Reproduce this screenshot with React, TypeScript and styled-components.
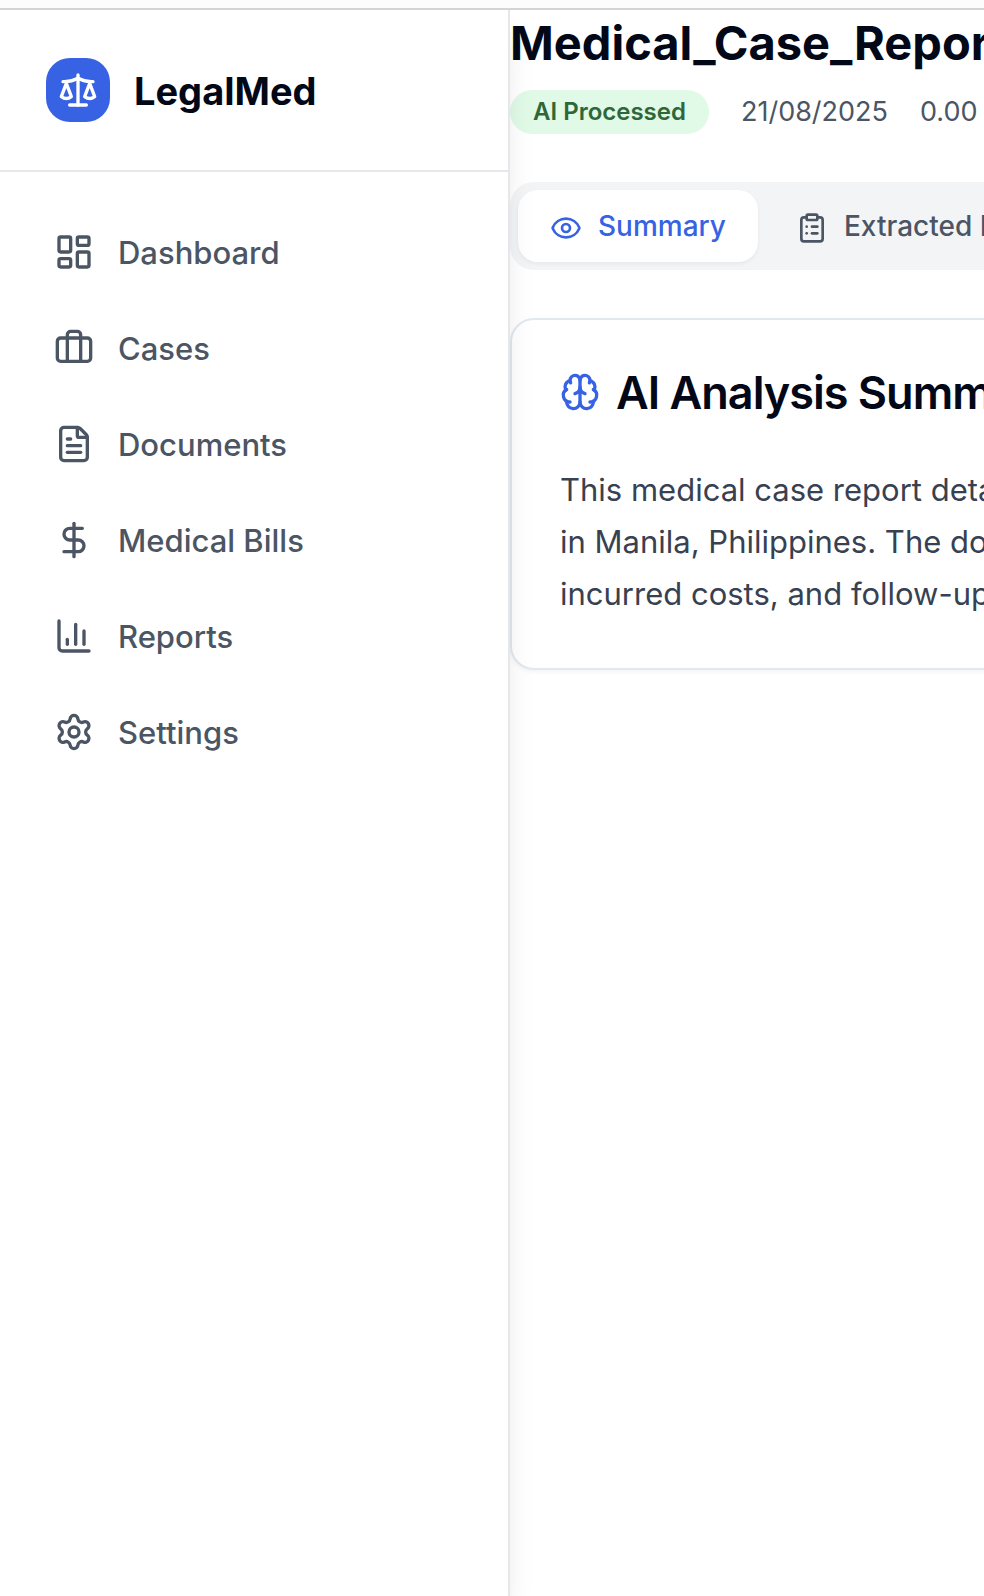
import React from "react";
import styled, { createGlobalStyle } from "styled-components";
import {
  Brain,
  Briefcase,
  ChartColumn,
  ClipboardList,
  DollarSign,
  Eye,
  FileText,
  LayoutDashboard,
  Scale,
  Settings,
} from "lucide-react";

const color = {
  ink: "#020817",
  body: "#374151",
  muted: "#4b5563",
  blue: "#3662e3",
  line: "#e5e7eb",
  cardLine: "#e2e8f0",
  track: "#f3f4f6",
  greenBg: "#e0fae7",
  greenText: "#2f6739",
};

const GlobalStyle = createGlobalStyle`
  *, *::before, *::after { box-sizing: border-box; }
  body {
    margin: 0;
    background: #fff;
    color: ${color.ink};
    font-family: Inter, "Liberation Sans", sans-serif;
    -webkit-font-smoothing: antialiased;
  }
`;

const Page = styled.div`
  display: flex;
  flex-direction: column;
  min-height: 100vh;
  overflow: hidden;
`;

const TopStrip = styled.div`
  flex: none;
  height: 10px;
  background: #fcfcfc;
  border-bottom: 2px solid #d4d4d4;
`;

const Shell = styled.div`
  flex: 1;
  display: flex;
`;

const Sidebar = styled.aside`
  position: relative;
  z-index: 1;
  flex: 0 0 510px;
  background: #fff;
  border-right: 2px solid ${color.line};
  box-shadow: 0 20px 30px -6px rgba(0, 0, 0, 0.1), 0 8px 12px -8px rgba(0, 0, 0, 0.1);
`;

const Brand = styled.div`
  display: flex;
  align-items: center;
  gap: 24px;
  padding: 48px 46px;
  border-bottom: 2px solid ${color.line};
  font-size: 38px;
  line-height: 56px;
  font-weight: 700;
`;

const BrandMark = styled.span`
  display: grid;
  place-items: center;
  width: 64px;
  height: 64px;
  border-radius: 24px;
  background: ${color.blue};
  color: #fff;
`;

const Label = styled.span`
  padding-top: 2px;
`;

const Nav = styled.nav`
  padding: 32px;
`;

const NavLink = styled.a`
  display: flex;
  align-items: center;
  gap: 24px;
  padding: 24px 22px;
  color: ${color.muted};
  font-size: 31px;
  line-height: 46px;
  font-weight: 500;
  text-decoration: none;
`;

const Main = styled.main`
  flex: 1;
  min-width: 0;
  overflow: hidden;
`;

const Content = styled.div`
  display: flex;
  flex-direction: column;
  gap: 48px;
  min-width: 960px;
`;

const Title = styled.h1`
  margin: 0 0 14px;
  font-size: 47px;
  line-height: 66px;
  font-weight: 700;
`;

const Meta = styled.div`
  display: flex;
  align-items: center;
  gap: 32px;
  color: ${color.muted};
  font-size: 27px;
  line-height: 44px;
`;

const Badge = styled.span`
  padding: 0 23px;
  border-radius: 22px;
  background: ${color.greenBg};
  color: ${color.greenText};
  font-size: 24px;
  font-weight: 600;
`;

const Tabs = styled.div`
  display: flex;
  gap: 6px;
  padding: 8px;
  border-radius: 24px;
  background: ${color.track};
`;

const Tab = styled.button<{ $active?: boolean }>`
  padding: 16px 32px;
  border: 0;
  border-radius: 20px;
  background: ${(p) => (p.$active ? "#fff" : "transparent")};
  box-shadow: ${(p) => (p.$active ? "0 2px 4px rgba(0, 0, 0, 0.05)" : "none")};
  color: ${(p) => (p.$active ? color.blue : color.muted)};
  font: 500 28px/40px Inter, "Liberation Sans", sans-serif;
  white-space: nowrap;
  cursor: pointer;

  svg {
    vertical-align: middle;
    margin-right: 16px;
  }
`;

const Card = styled.section`
  padding: 48px;
  border: 2px solid ${color.cardLine};
  border-radius: 24px;
  background: #fff;
  box-shadow: 0 2px 4px rgba(0, 0, 0, 0.05);
`;

const CardTitle = styled.h2`
  display: flex;
  align-items: center;
  gap: 16px;
  margin: 0 0 48px;
  font-size: 45px;
  line-height: 46px;
  font-weight: 600;
  letter-spacing: -1px;

  svg {
    color: ${color.blue};
  }
`;

const Summary = styled.p`
  margin: 0;
  color: ${color.body};
  font-size: 31px;
  line-height: 52px;
  white-space: pre-line;
`;

const navItems = [
  { label: "Dashboard", Icon: LayoutDashboard },
  { label: "Cases", Icon: Briefcase },
  { label: "Documents", Icon: FileText },
  { label: "Medical Bills", Icon: DollarSign },
  { label: "Reports", Icon: ChartColumn },
  { label: "Settings", Icon: Settings },
];

const summaryText = [
  "This medical case report details",
  "in Manila, Philippines. The document",
  "incurred costs, and follow-up",
].join("\n");

export default function App() {
  return (
    <Page>
      <GlobalStyle />
      <TopStrip />
      <Shell>
        <Sidebar>
          <Brand>
            <BrandMark>
              <Scale size={40} />
            </BrandMark>
            <Label>LegalMed</Label>
          </Brand>
          <Nav aria-label="Primary">
            {navItems.map(({ label, Icon }) => (
              <NavLink key={label} href="#">
                <Icon size={40} />
                <Label>{label}</Label>
              </NavLink>
            ))}
          </Nav>
        </Sidebar>
        <Main>
          <Content>
            <header>
              <Title>Medical_Case_Report</Title>
              <Meta>
                <Badge>AI Processed</Badge>
                <span>21/08/2025</span>
                <span>0.00 MB</span>
              </Meta>
            </header>
            <Tabs role="tablist">
              <Tab type="button" role="tab" aria-selected="true" $active>
                <Eye size={32} />
                Summary
              </Tab>
              <Tab type="button" role="tab" aria-selected="false">
                <ClipboardList size={32} />
                Extracted Data
              </Tab>
            </Tabs>
            <Card>
              <CardTitle>
                <Brain size={40} />
                <Label>AI Analysis Summary</Label>
              </CardTitle>
              <Summary>{summaryText}</Summary>
            </Card>
          </Content>
        </Main>
      </Shell>
    </Page>
  );
}
